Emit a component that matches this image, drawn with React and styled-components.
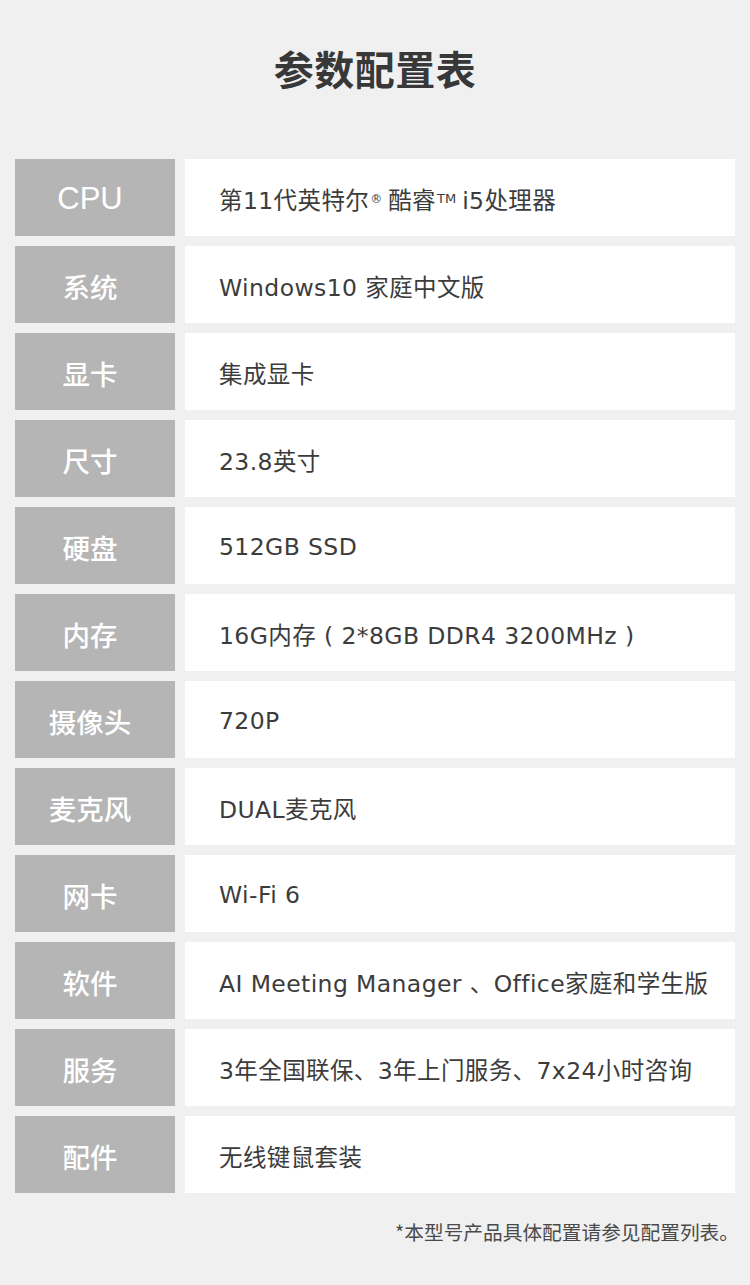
import React from 'react'
import styled, { createGlobalStyle } from "styled-components"

const GlobalStyle = createGlobalStyle`
html, body {
  margin: 0;
  padding: 0;
  background: #f0f0f0;
}
`;

const Page = styled.div`
width: 750px;
min-height: 1285px;
background: #f0f0f0;
box-sizing: border-box;
padding: 44px 15px 0;
font-family: "DejaVu Sans", "Noto Sans CJK SC", sans-serif;
`;

const Title = styled.h1`
margin: 0 0 67px;
text-align: center;
font-family: "Noto Sans CJK SC", sans-serif;
font-size: 40px;
line-height: 48px;
font-weight: 700;
color: #383838;
letter-spacing: 0.5px;
`;

const Table = styled.div`
display: flex;
flex-direction: column;
gap: 10px;
`;

const Row = styled.div`
display: grid;
grid-template-columns: 160px 1fr;
gap: 10px;
height: 77px;
`;

const Label = styled.div`
display: flex;
align-items: center;
justify-content: center;
background: #b5b5b5;
color: #fff;
font-family: ${p => p.$latin ? '"Liberation Sans", sans-serif' : '"Noto Sans CJK SC", sans-serif'};
font-size: ${p => p.$latin ? '31px' : '27.5px'};
font-weight: 500;
padding: 3px 10px 0 0;
`;

const Value = styled.div`
display: flex;
align-items: center;
background: #fff;
padding: 2px 0 0 34px;
color: #3c3c3c;
font-size: 23.5px;
letter-spacing: 0.4px;
white-space: nowrap;
`;

const Mark = styled.sup`
font-size: 12px;
vertical-align: 10px;
margin: 0 6px 0 1px;
letter-spacing: 0;
`;

const Tm = styled.span`
font-size: 13px;
vertical-align: 7px;
margin: 0 6px 0 1px;
letter-spacing: 0;
`;

const Note = styled.p`
margin: 26px -4px 0 0;
text-align: right;
font-family: "Noto Sans CJK SC", sans-serif;
font-size: 19.7px;
line-height: 25px;
color: #4a4a4a;
`;

const specs = [
  { label: "CPU", latin: true, value: <>第11代英特尔<Mark>®</Mark>酷睿<Tm>TM</Tm>i5处理器</> },
  { label: "系统", value: "Windows10 家庭中文版" },
  { label: "显卡", value: "集成显卡" },
  { label: "尺寸", value: "23.8英寸" },
  { label: "硬盘", value: "512GB SSD" },
  { label: "内存", value: "16G内存 ( 2*8GB DDR4 3200MHz )" },
  { label: "摄像头", value: "720P" },
  { label: "麦克风", value: "DUAL麦克风" },
  { label: "网卡", value: "Wi-Fi 6" },
  { label: "软件", value: "AI Meeting Manager 、Office家庭和学生版" },
  { label: "服务", value: "3年全国联保、3年上门服务、7x24小时咨询" },
  { label: "配件", value: "无线键鼠套装" },
];

const App = () => {
  return (
    <Page>
      <GlobalStyle />
      <Title>参数配置表</Title>
      <Table>
        {specs.map(s => (
          <Row key={s.label}>
            <Label $latin={s.latin}>{s.label}</Label>
            <Value>{s.value}</Value>
          </Row>
        ))}
      </Table>
      <Note>*本型号产品具体配置请参见配置列表。</Note>
    </Page>
  )
}

export default App
